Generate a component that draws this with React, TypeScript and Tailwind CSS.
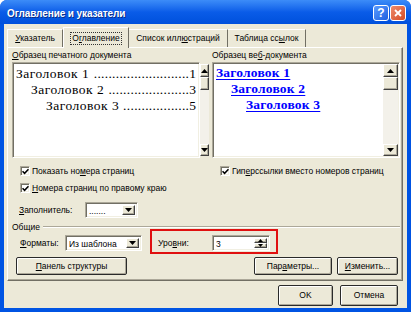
import React from "react";

const sans = "font-['Liberation_Sans',Tahoma,Arial,sans-serif]";
const serif = "font-['Liberation_Serif','Times_New_Roman',serif]";

const raised =
  "border border-t-white border-l-white border-r-[#404040] border-b-[#404040] shadow-[inset_-1px_-1px_0_#ACA899] bg-[#ECE9D8]";
const sunken =
  "border border-t-[#ACA899] border-l-[#ACA899] border-r-white border-b-white shadow-[inset_1px_1px_0_#716F64,inset_-1px_-1px_0_#F1EFE2]";
const btn =
  "flex items-center justify-center rounded-[2px] border border-[#2A2A2A] bg-[#ECE9D8] shadow-[inset_1px_1px_0_#fff,inset_-1px_-1px_0_#ACA899]";

function U({ children }: { children: React.ReactNode }) {
  return <span className="underline underline-offset-[1px] decoration-[1px]">{children}</span>;
}

function Arrow({ dir = "down" }: { dir?: "up" | "down" }) {
  return (
    <svg width="7" height="4" viewBox="0 0 7 4">
      {dir === "down" ? <polygon points="0,0 7,0 3.5,4" fill="#000" /> : <polygon points="0,4 7,4 3.5,0" fill="#000" />}
    </svg>
  );
}

function Check({ children }: { children: React.ReactNode }) {
  return (
    <div className="flex h-[14px] items-center gap-[2px] pl-[8px]">
      <div className={`flex h-[10px] w-[10px] items-center justify-center bg-white ${sunken}`}>
        <svg width="7" height="7" viewBox="0 0 7 7">
          <path d="M0.5 3.2 L2.6 5.3 L6.5 1.2" stroke="#000" strokeWidth="1.6" fill="none" />
        </svg>
      </div>
      <span>{children}</span>
    </div>
  );
}

function Combo({ w, text }: { w: string; text: string }) {
  return (
    <div className={`flex h-[16px] ${w} items-stretch bg-white p-[2px] ${sunken}`}>
      <span className="flex-1 pl-[1px] leading-[12px]">{text}</span>
      <div className={`flex w-[13px] items-center justify-center ${raised}`}>
        <Arrow />
      </div>
    </div>
  );
}

function Scroll() {
  return (
    <div className="flex w-[15px] flex-col bg-[#F3F1EA]">
      <div className={`flex h-[13px] items-center justify-center ${raised}`}>
        <Arrow dir="up" />
      </div>
      <div className={`h-[13px] ${raised}`} />
      <div className="flex-1" />
      <div className={`flex h-[12px] items-center justify-center ${raised}`}>
        <Arrow />
      </div>
    </div>
  );
}

function PrintLine({ pad, label, page, dots }: { pad: string; label: string; page: string; dots: number }) {
  return (
    <div className={`flex h-[16px] items-center leading-[15px] ${pad}`}>
      <span className="whitespace-nowrap tracking-[0.5px]">{label}</span>
      <span className="flex flex-1 justify-end overflow-hidden whitespace-nowrap tracking-[0.3px]">{".".repeat(dots)}</span>
      <span>{page}</span>
    </div>
  );
}

function WebLine({ pad, label }: { pad: string; label: string }) {
  return (
    <div className={`flex h-[16px] items-center leading-[14px] ${pad}`}>
      <span className="font-bold text-[#0000FF] underline decoration-[1px] underline-offset-[2px]">{label}</span>
    </div>
  );
}

export default function App() {
  return (
    <div className={`${sans} flex h-[312px] w-[411px] flex-col rounded-t-[7px] bg-[#0054E3] px-[4px] pb-[4px] text-[8.5px] text-black`}>
      {/* title bar */}
      <div className="-mx-[4px] flex h-[24px] items-center rounded-t-[7px] bg-gradient-to-b from-[#3C8CF8] via-[#0A5CE8] to-[#0050DC] pl-[7px] pr-[5px] pt-[2px]">
        <span className="flex-1 text-[10px] font-bold tracking-[-0.1px] text-white [text-shadow:1px_1px_0_#0A2F8A]">
          Оглавление и указатели
        </span>
        <div className="flex gap-[1px]">
          <div className="flex h-[16px] w-[16px] items-center justify-center rounded-[3px] border border-white bg-gradient-to-br from-[#5A9BFF] to-[#1D5FE0] text-[12px] font-bold leading-none text-white">
            ?
          </div>
          <div className="flex h-[16px] w-[16px] items-center justify-center rounded-[3px] border border-white bg-gradient-to-br from-[#EE8A6A] to-[#D44A22]">
            <svg width="8" height="8" viewBox="0 0 8 8">
              <path d="M1 1 L7 7 M7 1 L1 7" stroke="#fff" strokeWidth="1.8" />
            </svg>
          </div>
        </div>
      </div>

      {/* body */}
      <div className="flex flex-1 flex-col bg-[#ECE9D8] pl-[3px] pr-[4px]">
        {/* tabs */}
        <div className="flex h-[23px] items-end pt-[3px]">
          <div className="flex h-[18px] w-[56px] items-center justify-center border-l border-t border-r border-l-white border-t-white border-r-[#716F64]">
            <span><U>У</U>казатель</span>
          </div>
          <div className="relative z-10 -mb-[1px] flex h-[21px] w-[66px] items-center justify-center border-l border-t border-r border-l-white border-t-white border-r-[#716F64] bg-[#ECE9D8]">
            <span className="border border-dotted border-[#333] px-[1px] leading-[11px]">О<U>г</U>лавление</span>
          </div>
          <div className="flex h-[18px] w-[99px] items-center justify-center border-t border-r border-t-white border-r-[#716F64]">
            <span>Список илл<U>ю</U>страций</span>
          </div>
          <div className="flex h-[18px] w-[78px] items-center justify-center border-t border-r border-t-white border-r-[#716F64]">
            <span>Таблица сс<U>ы</U>лок</span>
          </div>
        </div>

        {/* panel */}
        <div className="flex h-[234px] flex-col border border-l-white border-t-white border-r-[#716F64] border-b-[#716F64] pl-[4px] pr-[2px] pt-[1px] shadow-[inset_-1px_-1px_0_#ACA899]">
          <div className="flex gap-[12px]">
            {/* print column */}
            <div className="flex w-[188px] flex-col">
              <div className="h-[13px] leading-[13px]">
                <U>О</U>бразец печатного документа
              </div>
              <div className={`flex h-[96px] bg-white ${sunken} p-[1px]`}>
                <div className={`${serif} flex-1 pr-[4px] pt-[1px] text-[13.5px]`}>
                  <PrintLine pad="pl-[2px]" label="Заголовок 1" page="1" dots={26} />
                  <PrintLine pad="pl-[17px]" label="Заголовок 2" page="3" dots={22} />
                  <PrintLine pad="pl-[32px]" label={"Заголовок 3\u00a0"} page="5" dots={18} />
                </div>
                <Scroll />
              </div>
              <div className="mt-[6px]">
                <Check>
                  Показать но<U>м</U>ера страниц
                </Check>
              </div>
              <div className="mt-[3px]">
                <Check>
                  <U>Н</U>омера страниц по правому краю
                </Check>
              </div>
              <div className="mt-[7px] flex h-[16px] items-center pl-[7px]">
                <span className="w-[66px]">
                  <U>З</U>аполнитель:
                </span>
                <Combo w="w-[53px]" text="......." />
              </div>
            </div>

            {/* web column */}
            <div className="flex w-[188px] flex-col">
              <div className="h-[13px] leading-[13px]">
                Образец ве<U>б</U>-документа
              </div>
              <div className={`flex h-[96px] bg-white ${sunken} p-[1px]`}>
                <div className={`${serif} flex-1 pt-[1px] text-[13.5px] tracking-[0.2px]`}>
                  <WebLine pad="pl-[2px]" label="Заголовок 1" />
                  <WebLine pad="pl-[17px]" label="Заголовок 2" />
                  <WebLine pad="pl-[32px]" label="Заголовок 3" />
                </div>
                <Scroll />
              </div>
              <div className="mt-[6px]">
                <Check>
                  Гип<U>е</U>рссылки вместо номеров страниц
                </Check>
              </div>
            </div>
          </div>

          {/* group: Общие */}
          <div className="mt-[3px] flex h-[12px] items-center gap-[3px]">
            <span>Общие</span>
            <div className="h-[2px] flex-1 border-t border-b border-t-[#ACA899] border-b-white" />
          </div>

          <div className="relative mt-[2px] flex h-[16px] items-center">
            <span className="ml-[8px] w-[45px]">
              <U>Ф</U>орматы:
            </span>
            <Combo w="w-[77px]" text="Из шаблона" />
            <span className="ml-[16px] w-[54px]">
              Уро<U>в</U>ни:
            </span>
            <div className={`flex h-[16px] w-[58px] items-stretch bg-white p-[2px] ${sunken}`}>
              <span className="flex-1 pl-[1px] leading-[12px]">3</span>
              <div className="flex w-[13px] flex-col">
                <div className={`flex flex-1 items-center justify-center ${raised}`}>
                  <svg width="5" height="3" viewBox="0 0 5 3"><polygon points="0,3 5,3 2.5,0" fill="#000" /></svg>
                </div>
                <div className={`flex flex-1 items-center justify-center ${raised}`}>
                  <svg width="5" height="3" viewBox="0 0 5 3"><polygon points="0,0 5,0 2.5,3" fill="#000" /></svg>
                </div>
              </div>
            </div>
            {/* red highlight */}
            <div className="pointer-events-none absolute left-[138px] top-[-6px] h-[25px] w-[128px] border-2 border-[#E01010]" />
          </div>

          <div className="mt-[6px] flex h-[18px]">
            <div className={`${btn} ml-[4px] w-[111px]`}>
              <span><U>П</U>анель структуры</span>
            </div>
            <div className="flex-1" />
            <div className={`${btn} w-[78px]`}>
              <span>Пар<U>а</U>метры...</span>
            </div>
            <div className={`${btn} ml-[5px] mr-[2px] w-[61px]`}>
              <span><U>И</U>зменить...</span>
            </div>
          </div>
        </div>

        {/* bottom buttons */}
        <div className="mt-[4px] flex h-[21px] justify-end gap-[7px] pr-[5px]">
          <div className={`${btn} w-[55px]`}>OK</div>
          <div className={`${btn} w-[58px]`}>Отмена</div>
        </div>
      </div>
    </div>
  );
}
